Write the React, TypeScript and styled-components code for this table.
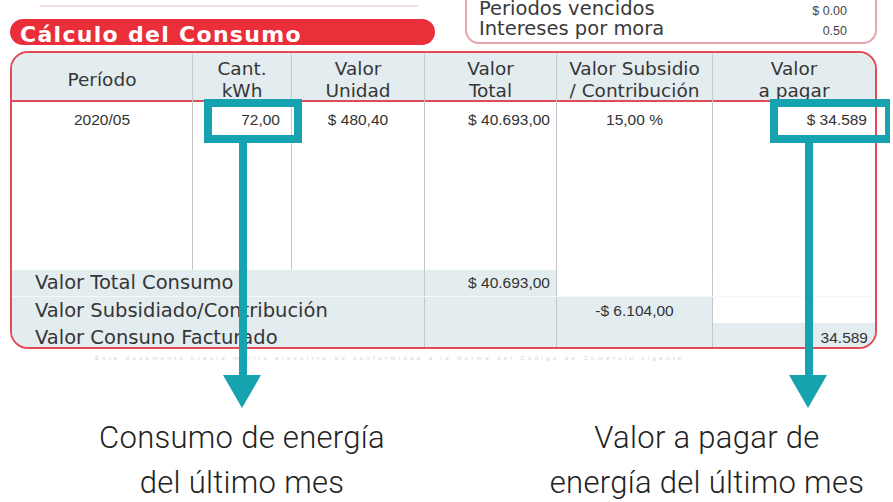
import React from 'react';
import styled, { createGlobalStyle } from 'styled-components';

const TEAL = '#16a2ae';
const RED = '#e24a57';
const PANEL_BG = '#e3ecef';
const COLS = '180px 99px 133px 132px 156px 163px';

const GlobalStyle = createGlobalStyle`
  html, body { margin: 0; padding: 0; background: #ffffff; }
  body { width: 893px; height: 502px; overflow: hidden; }
`;

const Page = styled.div`
  position: relative;
  width: 893px;
  height: 502px;
  overflow: hidden;
  background: #ffffff;
  font-family: "DejaVu Sans", "Liberation Sans", sans-serif;
  color: #363636;
`;

const TopBar = styled.div`
  display: grid;
  grid-template-columns: 465px 412px;
  height: 51px;
`;

const TopLeft = styled.div`
  display: flex;
  flex-direction: column;
`;

const FadedRule = styled.div`
  margin: 5px 0 0 40px;
  width: 378px;
  height: 2px;
  background: #f5e0e3;
`;

const Pill = styled.div`
  margin: 12px 0 0 10px;
  width: 425px;
  height: 26px;
  box-sizing: border-box;
  padding: 3px 0 0 10px;
  border-radius: 13px;
  background: #ea2f3b;
  color: #ffffff;
  font-weight: bold;
  font-size: 22px;
  letter-spacing: 1.3px;
  line-height: 26px;
  white-space: nowrap;
`;

const DuesBox = styled.div`
  height: 44px;
  box-sizing: border-box;
  border: 2px solid #eba3ab;
  border-top: none;
  border-radius: 0 0 14px 14px;
  padding: 0 28px 0 12px;
  display: flex;
  flex-direction: column;
`;

const DuesRow = styled.div<{ $first?: boolean }>`
  display: flex;
  justify-content: space-between;
  align-items: baseline;
  height: 19.5px;
  line-height: 19.5px;
  margin-top: ${(p) => (p.$first ? '-1px' : '0')};
`;

const DuesLabel = styled.span`
  font-size: 19.5px;
  color: #3a3a3a;
  white-space: nowrap;
`;

const DuesValue = styled.span`
  font-family: "Liberation Sans", Arial, sans-serif;
  font-size: 12.5px;
  color: #454545;
`;

const Table = styled.div`
  margin-left: 10px;
  width: 867px;
  box-sizing: border-box;
  border: 2px solid ${RED};
  border-radius: 18px;
  overflow: hidden;
  background: #ffffff;
`;

const HeaderRow = styled.div`
  display: grid;
  grid-template-columns: ${COLS};
  height: 49px;
  box-sizing: border-box;
  background: ${PANEL_BG};
  border-bottom: 2px solid ${RED};
`;

const HeaderCell = styled.div<{ $single?: boolean; $first?: boolean }>`
  box-sizing: border-box;
  padding-top: ${(p) => (p.$single ? '16px' : '5px')};
  border-left: ${(p) => (p.$first ? 'none' : '1px solid #c4cbce')};
  text-align: center;
  font-size: 18.5px;
  line-height: 22px;
  color: #363636;
  white-space: nowrap;
`;

const BodyRow = styled.div`
  display: grid;
  grid-template-columns: ${COLS};
  height: 168px;
`;

const BodyCell = styled.div<{ $align: string; $pr: number; $first?: boolean }>`
  box-sizing: border-box;
  padding: 9px ${(p) => p.$pr}px 0 0;
  border-left: ${(p) => (p.$first ? 'none' : '1px solid #c6c6c6')};
  text-align: ${(p) => p.$align};
  font-family: "Liberation Sans", Arial, sans-serif;
  font-size: 15.5px;
  line-height: 18px;
  color: #333333;
  white-space: nowrap;
`;

const SumRow = styled.div<{ $h: number; $sep?: boolean }>`
  display: grid;
  grid-template-columns: 412px 132px 156px 163px;
  height: ${(p) => p.$h}px;
  box-sizing: border-box;
  border-top: ${(p) => (p.$sep ? '1px solid #f4f8f9' : 'none')};
`;

const SumLabel = styled.div<{ $pt: number }>`
  box-sizing: border-box;
  padding: ${(p) => p.$pt}px 0 0 23px;
  background: ${PANEL_BG};
  font-size: 19.5px;
  line-height: 24px;
  color: #363636;
  white-space: nowrap;
`;

const SumValue = styled.div<{ $pt: number; $filled: boolean; $align: string; $pr: number }>`
  box-sizing: border-box;
  padding: ${(p) => p.$pt}px ${(p) => p.$pr}px 0 0;
  background: ${(p) => (p.$filled ? PANEL_BG : '#ffffff')};
  border-left: 1px solid #c3c8ca;
  text-align: ${(p) => p.$align};
  font-family: "Liberation Sans", Arial, sans-serif;
  font-size: 15.5px;
  line-height: 24px;
  color: #333333;
  white-space: nowrap;
`;

const FinePrint = styled.div`
  margin: 5px 0 0 95px;
  width: 710px;
  height: 8px;
  font-family: "Liberation Sans", Arial, sans-serif;
  font-size: 6px;
  line-height: 8px;
  letter-spacing: 3.4px;
  color: #d4d4d4;
  white-space: nowrap;
  overflow: hidden;
`;

const Notes = styled.div`
  display: grid;
  grid-template-columns: 484px 372px;
  column-gap: 37px;
  margin-top: 53px;
`;

const Note = styled.div`
  text-align: center;
  font-family: Roboto, "Liberation Sans", sans-serif;
  font-weight: 300;
  font-size: 31px;
  letter-spacing: 0.3px;
  line-height: 45px;
  color: #222222;
  white-space: nowrap;
`;

const Frame = styled.div<{ $x: number; $w: number; $right: number }>`
  position: absolute;
  left: ${(p) => p.$x}px;
  top: 99px;
  width: ${(p) => p.$w}px;
  height: 44px;
  box-sizing: border-box;
  border: 8px solid ${TEAL};
  border-right-width: ${(p) => p.$right}px;
`;

const Stem = styled.div<{ $x: number }>`
  position: absolute;
  left: ${(p) => p.$x}px;
  top: 143px;
  width: 8px;
  height: 234px;
  background: ${TEAL};
`;

const Head = styled.div<{ $x: number }>`
  position: absolute;
  left: ${(p) => p.$x}px;
  top: 375px;
  width: 0;
  height: 0;
  border-left: 19.5px solid transparent;
  border-right: 19.5px solid transparent;
  border-top: 33px solid ${TEAL};
`;

const headers = [
  ['Período'],
  ['Cant.', 'kWh'],
  ['Valor', 'Unidad'],
  ['Valor', 'Total'],
  ['Valor Subsidio', '/ Contribución'],
  ['Valor', 'a pagar'],
];

const bodyCells = [
  { text: '2020/05', align: 'center', pr: 0 },
  { text: '72,00', align: 'right', pr: 11 },
  { text: '$ 480,40', align: 'center', pr: 0 },
  { text: '$ 40.693,00', align: 'right', pr: 6 },
  { text: '15,00 %', align: 'center', pr: 0 },
  { text: '$ 34.589', align: 'right', pr: 8 },
];

const valueCols = [
  { align: 'right', pr: 6 },
  { align: 'center', pr: 0 },
  { align: 'right', pr: 7 },
];

const summary = [
  { label: 'Valor Total Consumo', h: 26, pt: 1, fills: [true, false, false], values: ['$ 40.693,00', '', ''] },
  { label: 'Valor Subsidiado/Contribución', h: 26, pt: 1.5, fills: [true, true, false], values: ['', '-$ 6.104,00', ''] },
  { label: 'Valor Consuno Facturado', h: 25, pt: 3, fills: [true, true, true], values: ['', '', '34.589'] },
];

const callouts = [
  { x: 204, w: 98, right: 8, stem: 239, head: 223 },
  { x: 770, w: 120, right: 5, stem: 805, head: 789 },
];

export default function App() {
  return (
    <Page>
      <GlobalStyle />
      <TopBar>
        <TopLeft>
          <FadedRule />
          <Pill>Cálculo del Consumo</Pill>
        </TopLeft>
        <DuesBox>
          <DuesRow $first>
            <DuesLabel>Periodos vencidos</DuesLabel>
            <DuesValue>$ 0.00</DuesValue>
          </DuesRow>
          <DuesRow>
            <DuesLabel>Intereses por mora</DuesLabel>
            <DuesValue>0.50</DuesValue>
          </DuesRow>
        </DuesBox>
      </TopBar>

      <Table>
        <HeaderRow>
          {headers.map((lines, i) => (
            <HeaderCell key={i} $single={lines.length === 1} $first={i === 0}>
              {lines.map((l, j) => (
                <div key={j}>{l}</div>
              ))}
            </HeaderCell>
          ))}
        </HeaderRow>
        <BodyRow>
          {bodyCells.map((c, i) => (
            <BodyCell key={i} $align={c.align} $pr={c.pr} $first={i === 0}>
              {c.text}
            </BodyCell>
          ))}
        </BodyRow>
        {summary.map((r, i) => (
          <SumRow key={i} $h={r.h} $sep={i > 0}>
            <SumLabel $pt={r.pt}>{r.label}</SumLabel>
            {r.values.map((v, j) => (
              <SumValue
                key={j}
                $pt={r.pt}
                $filled={r.fills[j]}
                $align={valueCols[j].align}
                $pr={valueCols[j].pr}
              >
                {v}
              </SumValue>
            ))}
          </SumRow>
        ))}
      </Table>

      <FinePrint>Éste documento presta mérito ejecutivo de conformidad a la Norma del Código de Comercio vigente</FinePrint>

      <Notes>
        <Note>
          Consumo de energía
          <br />
          del último mes
        </Note>
        <Note>
          Valor a pagar de
          <br />
          energía del último mes
        </Note>
      </Notes>

      {callouts.map((c, i) => (
        <React.Fragment key={i}>
          <Frame $x={c.x} $w={c.w} $right={c.right} />
          <Stem $x={c.stem} />
          <Head $x={c.head} />
        </React.Fragment>
      ))}
    </Page>
  );
}
